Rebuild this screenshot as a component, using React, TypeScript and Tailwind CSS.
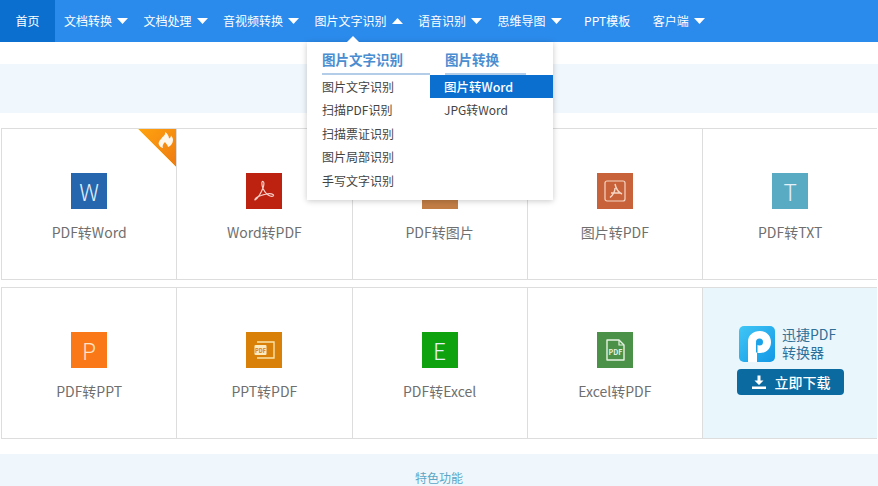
const navItems = [
  { label: '文档转换', caret: 'down' },
  { label: '文档处理', caret: 'down' },
  { label: '音视频转换', caret: 'down' },
  { label: '图片文字识别', caret: 'up' },
  { label: '语音识别', caret: 'down' },
  { label: '思维导图', caret: 'down' },
  { label: 'PPT模板', caret: '' },
  { label: '客户端', caret: 'down' },
];

const ocrLinks = ['图片文字识别', '扫描PDF识别', '扫描票证识别', '图片局部识别', '手写文字识别'];

function Caret({ up }: { up?: boolean }) {
  return (
    <svg width="11" height="6" viewBox="0 0 11 6" className="shrink-0">
      <path d={up ? 'M5.5 0L11 6H0Z' : 'M0 0H11L5.5 6Z'} fill="white" />
    </svg>
  );
}

function AcrobatMark({ color }: { color: string }) {
  return (
    <path
      d="M9 27c3-2 6-7 8-12 1-3 1-6 0-6.500-1.500-.5-1.500 3 0 7 2 4 4 6.500 7 7.500 3 1 4.500-.5 3-1.500-2-1.500-8-.5-12 1-3 1-6.500 3-6 4.500z"
      fill="none"
      stroke={color}
      strokeWidth="1.200"
      strokeLinejoin="round"
    />
  );
}

function IconBox({ bg, children }: { bg: string; children: React.ReactNode }) {
  return (
    <div className={`w-9 h-9 flex items-center justify-center ${bg}`}>
      {children}
    </div>
  );
}

function Letter({ children }: { children: string }) {
  return <span className="text-[23px] font-light leading-none text-[#e4f1fa]">{children}</span>;
}

function Tile({ label, icon, children }: { label: string; icon: React.ReactNode; children?: React.ReactNode }) {
  return (
    <div className="relative h-[152px] border-l border-y border-[#dddddd] bg-white flex flex-col items-center pt-[44px]">
      {icon}
      <p className="mt-[13px] text-sm leading-5 text-[#6f6f6f]">{label}</p>
      {children}
    </div>
  );
}

export default function App() {
  return (
    <div className="w-[878px] h-[486px] overflow-hidden relative bg-white font-['Noto_Sans_CJK_SC',sans-serif]">
      {/* nav */}
      <nav className="h-[42px] bg-[#2b8bec] flex items-center text-xs text-white">
        <a className="w-[55px] h-full bg-[#0b6fd0] flex items-center justify-center">首页</a>
        <div className="flex items-center gap-[15.5px] pl-[9px]">
          {navItems.map(({ label, caret }) => (
            <a key={label} className={`flex items-center gap-[5px] ${caret ? '' : 'mx-[7px]'}`}>
              {label}
              {caret && <Caret up={caret === 'up'} />}
            </a>
          ))}
        </div>
      </nav>

      {/* dropdown */}
      <div className="absolute left-[307px] top-[42px] w-[246px] h-[158px] bg-white shadow-[0_1px_6px_rgba(0,0,0,0.22)] flex z-10">
        <svg width="14" height="7" viewBox="0 0 14 7" className="absolute left-[39px] -top-[6px]">
          <path d="M7 0L14 7H0Z" fill="white" />
        </svg>
        <div className="w-[123px] pl-[15px]">
          <h3 className="mt-[8px] h-[25px] leading-[19px] text-[13.5px] font-bold text-[#4a8dd0] border-b-2 border-[#b3cde8]">图片文字识别</h3>
          <ul className="text-xs text-[#444444]">
            {ocrLinks.map((t) => (
              <li key={t} className="h-[23.4px] leading-[23px]">{t}</li>
            ))}
          </ul>
        </div>
        <div className="w-[123px]">
          <h3 className="mt-[8px] ml-[15px] w-[81px] h-[25px] leading-[19px] text-[13.5px] font-bold text-[#4a8dd0] border-b-2 border-[#b3cde8]">图片转换</h3>
          <ul className="text-xs">
            <li className="h-[23.4px] leading-[23px] pl-[14px] bg-[#0b6fd0] text-white text-[12.5px] font-medium">图片转Word</li>
            <li className="h-[23.4px] leading-[23px] pl-[14px] text-[#444444]">JPG转Word</li>
          </ul>
        </div>
      </div>

      <div className="mt-[22px] h-[49px] bg-[#f0f7fd]" />

      {/* tiles */}
      <div className="mt-[15px] ml-px grid grid-cols-[repeat(5,175.25px)] gap-y-[7px]">
        <Tile label="PDF转Word" icon={<IconBox bg="bg-[#2566ae]"><Letter>W</Letter></IconBox>}>
          <svg width="38" height="38" viewBox="0 0 38 38" className="absolute right-0 top-0">
            <defs>
              <linearGradient id="hot" x1="0" y1="0" x2="1" y2="1">
                <stop offset="0" stopColor="#ffa30f" />
                <stop offset="1" stopColor="#ee7a12" />
              </linearGradient>
            </defs>
            <path d="M0 0H38V38Z" fill="url(#hot)" />
            <path d="M0 0L38 38" stroke="#ffe9a8" strokeWidth="1" />
            <path
              d="M27 3C28 6 25 7 23 10C21 12 20 14 21 16C22 18 24 19 25 19C24 17 25 15 27 13C28 15 30 16 30 18C33 17 35 14 35 11C35 9 34 8 33 6.500C33 8 32 9 31 9.500C31 7 29 4 27 3Z"
              fill="white"
              fillOpacity="0.92"
            />
          </svg>
        </Tile>
        <Tile
          label="Word转PDF"
          icon={
            <IconBox bg="bg-[#bd2210]">
              <svg width="36" height="36" viewBox="0 0 36 36"><AcrobatMark color="#f6cfc8" /></svg>
            </IconBox>
          }
        />
        <Tile label="PDF转图片" icon={<IconBox bg="bg-[#c27d45]"><span /></IconBox>} />
        <Tile
          label="图片转PDF"
          icon={
            <IconBox bg="bg-[#c8623a]">
              <svg width="36" height="36" viewBox="0 0 36 36">
                <rect x="8" y="8" width="20" height="20" rx="2" fill="none" stroke="#f6d6c4" strokeWidth="1.200" />
                <path d="M18 11c1 5 3 8 7 10M18 15c0 4-2 7-5 9.500M14 20h9" fill="none" stroke="#f6d6c4" strokeWidth="1.400" />
              </svg>
            </IconBox>
          }
        />
        <Tile label="PDF转TXT" icon={<IconBox bg="bg-[#59abc3]"><Letter>T</Letter></IconBox>} />

        <Tile label="PDF转PPT" icon={<IconBox bg="bg-[#fb7819]"><span className="text-[23px] font-light leading-none text-[#fde3c4]">P</span></IconBox>} />
        <Tile
          label="PPT转PDF"
          icon={
            <IconBox bg="bg-[#d98008]">
              <svg width="36" height="36" viewBox="0 0 36 36">
                <path d="M11 10H28V26H11" fill="none" stroke="#fbe3a8" strokeWidth="1.400" />
                <rect x="8.500" y="13" width="12" height="10" rx="1" fill="#fbe9c0" />
                <text x="14.500" y="20.500" textAnchor="middle" fontSize="5.500" fontWeight="700" fill="#d98008">PDF</text>
              </svg>
            </IconBox>
          }
        />
        <Tile label="PDF转Excel" icon={<IconBox bg="bg-[#0ea30e]"><Letter>E</Letter></IconBox>} />
        <Tile
          label="Excel转PDF"
          icon={
            <IconBox bg="bg-[#4b9148]">
              <svg width="36" height="36" viewBox="0 0 36 36">
                <path d="M10 8H22L27 13V28H10Z" fill="none" stroke="#e6f2e2" strokeWidth="1.400" strokeLinejoin="round" />
                <path d="M22 8V13H27" fill="none" stroke="#e6f2e2" strokeWidth="1.200" />
                <text x="18.500" y="23" textAnchor="middle" fontSize="7" fontWeight="700" fill="#e6f2e2">PDF</text>
              </svg>
            </IconBox>
          }
        />

        {/* download promo */}
        <div className="h-[152px] border-l border-y border-[#dddddd] bg-[#e9f7fd] pt-[38px] pl-[34px]">
          <div className="flex items-center gap-[7px] pl-[2px]">
            <svg width="36" height="36" viewBox="0 0 36 36" className="shrink-0">
              <defs>
                <linearGradient id="logo" x1="0" y1="0" x2="1" y2="1">
                  <stop offset="0" stopColor="#41c6f6" />
                  <stop offset="1" stopColor="#1398e6" />
                </linearGradient>
              </defs>
              <rect width="36" height="36" rx="5" fill="url(#logo)" />
              <path d="M9 36V16C9 9 14 5 21 5C28 5 32 10 32 16C32 23 27 27 21 27C20 27 19 27 18 26.500V36Z" fill="white" />
              <circle cx="20.500" cy="16" r="3.500" fill="#1ba3ea" />
              <path d="M18.500 17V26.500H17V17Z" fill="#1ba3ea" />
            </svg>
            <p className="-translate-y-px text-sm leading-[18px] text-[#2f7099]">迅捷PDF<br />转换器</p>
          </div>
          <button className="mt-[7px] w-[107px] h-[26px] rounded-[4px] bg-[#0b6aa0] flex items-center justify-center gap-[8px] text-sm font-medium text-white">
            <svg width="16" height="16" viewBox="0 0 16 16">
              <path d="M6.500 1.500H9.500V6.500H12.500L8 11L3.500 6.500H6.500Z" fill="white" />
              <rect x="1" y="12.500" width="14" height="2.500" fill="white" />
            </svg>
            立即下载
          </button>
        </div>
      </div>

      <div className="mt-[15px] h-[40px] bg-[#eff7fd] text-center">
        <p className="pt-[15px] text-xs leading-[18px] text-[#5aa7c6]">特色功能</p>
      </div>
    </div>
  );
}
